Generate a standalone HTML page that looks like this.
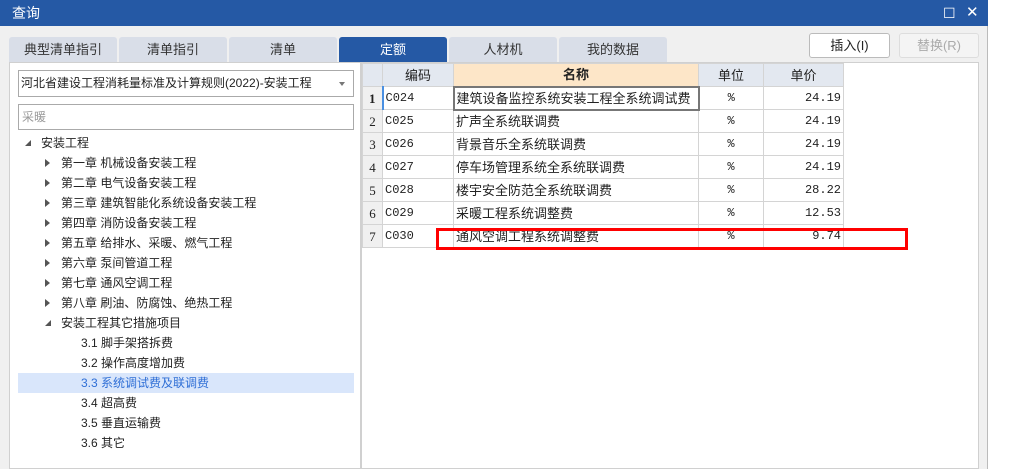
<!DOCTYPE html>
<html><head><meta charset="utf-8"><style>
*{margin:0;padding:0;box-sizing:border-box}
body{width:1026px;height:469px;background:#fff;position:relative;overflow:hidden;font-family:"Liberation Sans","Noto Sans CJK SC",sans-serif;font-size:12px;color:#222}
.abs{position:absolute}
#win{left:0;top:0;width:988px;height:469px;background:#f0f0f0;border-right:1px solid #bbb}
#title{left:0;top:0;width:988px;height:26px;background:#2559a5;color:#fff;font-size:14px;line-height:26px;padding-left:12px}
.tab{top:37px;height:25px;width:108px;background:#d9dee8;text-align:center;line-height:25px;font-size:13px;color:#333;border-radius:3px 3px 0 0}
.tab.on{background:#2559a5;color:#fff}
#left{left:9px;top:62px;width:352px;height:407px;background:#fff;border:1px solid #d0d0d0}
#dd{left:18px;top:70px;width:336px;height:27px;border:1px solid #aaa;background:#fff;font-size:12px;line-height:25px;padding-left:2px;color:#222}
#dd:after{content:"";position:absolute;right:8px;top:11px;border:3px solid transparent;border-top:4px solid #777}
#sr{left:18px;top:104px;width:336px;height:26px;border:1px solid #aaa;background:#fff;font-size:12px;line-height:24px;padding-left:3px;color:#999}
.tr{height:20px;line-height:20px;font-size:12px;color:#222;white-space:nowrap}
.arr{position:absolute;width:0;height:0}
.ar{border-left:5px solid #555;border-top:4px solid transparent;border-bottom:4px solid transparent}
.ad{border-right:6px solid #555;border-top:6px solid transparent;width:0}
#right{left:361px;top:62px;width:618px;height:407px;background:#fff;border:1px solid #d0d0d0}
table{position:absolute;left:362px;top:63px;border-collapse:collapse;table-layout:fixed;font-family:"Liberation Mono","Noto Sans CJK SC",monospace;font-size:12px}
td,th{border:1px solid #d4d4d4;height:23px;line-height:21px;padding:0 2px;white-space:nowrap;overflow:hidden;vertical-align:middle}
th{background:#e3e8f0;font-weight:normal;font-family:"Liberation Sans","Noto Sans CJK SC",sans-serif;font-size:13px}
th.nm{background:#fde6c8;font-weight:bold}
td.n{background:#f0f0f0;text-align:center;font-family:"Liberation Serif",serif;font-size:13px}
td.c{font-size:13px;font-family:"Liberation Sans","Noto Sans CJK SC",sans-serif}
td.u{text-align:center}
td.p{text-align:right}
.btn{top:33px;height:25px;border:1px solid #bbb;border-radius:3px;background:#fff;text-align:center;line-height:23px;font-size:13px}
</style></head><body>
<div id="win" class="abs"></div>
<div id="title" class="abs">查询<span style="position:absolute;left:943px;top:0;font-size:14px">☐</span><span style="position:absolute;left:966px;top:0;font-size:15px">✕</span></div>
<div class="abs tab" style="left:9px">典型清单指引</div>
<div class="abs tab" style="left:119px">清单指引</div>
<div class="abs tab" style="left:229px">清单</div>
<div class="abs tab on" style="left:339px">定额</div>
<div class="abs tab" style="left:449px">人材机</div>
<div class="abs tab" style="left:559px">我的数据</div>
<div class="abs btn" style="left:809px;width:81px;color:#222">插入(I)</div>
<div class="abs btn" style="left:899px;width:80px;color:#aaa;background:#f4f4f4;border-color:#ddd">替换(R)</div>
<div id="left" class="abs"></div>
<div id="dd" class="abs">河北省建设工程消耗量标准及计算规则(2022)-安装工程</div>
<div id="sr" class="abs">采暖</div>
<div class="abs" style="left:18px;top:373px;width:336px;height:20px;background:#d9e6fb"></div>
<div class="abs" style="left:0;top:133px;width:360px">
<div class="tr" style="position:relative;padding-left:41px"><span class="arr ad" style="left:25px;top:7px"></span>安装工程</div>
<div class="tr" style="position:relative;padding-left:61px"><span class="arr ar" style="left:45px;top:6px"></span>第一章 机械设备安装工程</div>
<div class="tr" style="position:relative;padding-left:61px"><span class="arr ar" style="left:45px;top:6px"></span>第二章 电气设备安装工程</div>
<div class="tr" style="position:relative;padding-left:61px"><span class="arr ar" style="left:45px;top:6px"></span>第三章 建筑智能化系统设备安装工程</div>
<div class="tr" style="position:relative;padding-left:61px"><span class="arr ar" style="left:45px;top:6px"></span>第四章 消防设备安装工程</div>
<div class="tr" style="position:relative;padding-left:61px"><span class="arr ar" style="left:45px;top:6px"></span>第五章 给排水、采暖、燃气工程</div>
<div class="tr" style="position:relative;padding-left:61px"><span class="arr ar" style="left:45px;top:6px"></span>第六章 泵间管道工程</div>
<div class="tr" style="position:relative;padding-left:61px"><span class="arr ar" style="left:45px;top:6px"></span>第七章 通风空调工程</div>
<div class="tr" style="position:relative;padding-left:61px"><span class="arr ar" style="left:45px;top:6px"></span>第八章 刷油、防腐蚀、绝热工程</div>
<div class="tr" style="position:relative;padding-left:61px"><span class="arr ad" style="left:45px;top:7px"></span>安装工程其它措施项目</div>
<div class="tr" style="padding-left:81px">3.1 脚手架搭拆费</div>
<div class="tr" style="padding-left:81px">3.2 操作高度增加费</div>
<div class="tr" style="padding-left:81px;color:#2f6fd6">3.3 系统调试费及联调费</div>
<div class="tr" style="padding-left:81px">3.4 超高费</div>
<div class="tr" style="padding-left:81px">3.5 垂直运输费</div>
<div class="tr" style="padding-left:81px">3.6 其它</div>
</div>
<div id="right" class="abs"></div>
<table style="width:481px">
<colgroup><col style="width:20px"><col style="width:71px"><col style="width:245px"><col style="width:65px"><col style="width:80px"></colgroup>
<tr><th></th><th>编码</th><th class="nm">名称</th><th>单位</th><th>单价</th></tr>
<tr><td class="n" style="font-weight:bold;border-right:2px solid #4a90e2">1</td><td>C024</td><td class="c" style="border:2px solid #777">建筑设备监控系统安装工程全系统调试费</td><td class="u">%</td><td class="p">24.19</td></tr>
<tr><td class="n">2</td><td>C025</td><td class="c">扩声全系统联调费</td><td class="u">%</td><td class="p">24.19</td></tr>
<tr><td class="n">3</td><td>C026</td><td class="c">背景音乐全系统联调费</td><td class="u">%</td><td class="p">24.19</td></tr>
<tr><td class="n">4</td><td>C027</td><td class="c">停车场管理系统全系统联调费</td><td class="u">%</td><td class="p">24.19</td></tr>
<tr><td class="n">5</td><td>C028</td><td class="c">楼宇安全防范全系统联调费</td><td class="u">%</td><td class="p">28.22</td></tr>
<tr><td class="n">6</td><td>C029</td><td class="c">采暖工程系统调整费</td><td class="u">%</td><td class="p">12.53</td></tr>
<tr><td class="n">7</td><td>C030</td><td class="c">通风空调工程系统调整费</td><td class="u">%</td><td class="p">9.74</td></tr>
</table>
<div class="abs" style="left:436px;top:228px;width:472px;height:22px;border:3px solid #f00"></div>
</body></html>
